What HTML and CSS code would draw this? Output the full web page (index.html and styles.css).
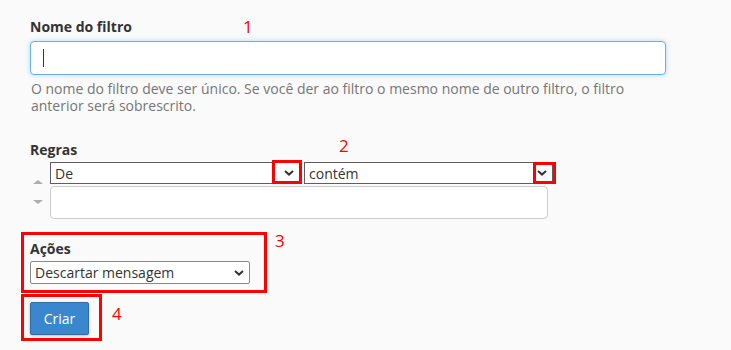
FILE: index.html
```html
<!DOCTYPE html>
<html lang="pt">
<head>
<meta charset="utf-8">
<link rel="stylesheet" href="styles.css">
</head>
<body>
<div class="page">
  <div class="group group-name">
    <label class="label">Nome do filtro</label>
    <span class="mark mark-1">1</span>
    <div class="text-input focus"><span class="caret"></span></div>
    <p class="help">O nome do filtro deve ser único. Se você der ao filtro o mesmo nome de outro filtro, o filtro anterior será sobrescrito.</p>
  </div>

  <div class="group group-rules">
    <label class="label">Regras</label>
    <span class="mark mark-2">2</span>
    <div class="rule">
      <div class="movers">
        <span class="tri tri-up"></span>
        <span class="tri tri-down"></span>
      </div>
      <div class="rule-fields">
        <div class="selects">
          <div class="select sel-part">
            <span>De</span>
            <svg class="chev" width="10" height="6" viewBox="0 0 10 6"><path d="M1 1 L5 4.6 L9 1" fill="none" stroke="#333" stroke-width="2"/></svg>
            <span class="chev-box"></span>
          </div>
          <div class="select sel-match">
            <span>contém</span>
            <svg class="chev" width="10" height="6" viewBox="0 0 10 6"><path d="M1 1 L5 4.6 L9 1" fill="none" stroke="#333" stroke-width="2"/></svg>
            <span class="chev-box"></span>
          </div>
        </div>
        <div class="rule-value"></div>
      </div>
    </div>
  </div>

  <div class="annot-box actions-box">
    <span class="mark mark-3">3</span>
    <label class="label">Ações</label>
    <div class="select sel-action">
      <span>Descartar mensagem</span>
      <svg class="chev" width="10" height="6" viewBox="0 0 10 6"><path d="M1 1 L5 4.6 L9 1" fill="none" stroke="#333" stroke-width="2"/></svg>
    </div>
  </div>

  <div class="annot-box create-box">
    <span class="mark mark-4">4</span>
    <button class="btn">Criar</button>
  </div>
</div>
</body>
</html>
```

FILE: styles.css
```css
* { box-sizing: border-box; }
html, body { margin: 0; padding: 0; }
body {
  background: #fafafa;
  font-family: "Open Sans", "Liberation Sans", sans-serif;
  color: #333;
  width: 731px;
  height: 350px;
  overflow: hidden;
}
.page {
  padding: 17px 0 0 30px;
  width: 700px;
}
.group { position: relative; }
.label {
  display: block;
  font-weight: 700;
  font-size: 14px;
  line-height: 20px;
  color: #333;
}
.mark {
  position: absolute;
  color: #ff0000;
  font-family: "Open Sans", "Liberation Sans", sans-serif;
  font-size: 17px;
  line-height: 20px;
}
.mark-1 { left: 213px; top: 0px; }
.mark-2 { left: 309px; top: -4px; }
.mark-3 { left: 251px; top: -4px; }
.mark-4 { left: 88px; top: 7px; }

.text-input {
  margin-top: 4px;
  width: 636px;
  height: 34px;
  background: #fff;
  border: 1px solid #ccc;
  border-radius: 4px;
  display: flex;
  align-items: center;
  padding-left: 12px;
}
.text-input.focus {
  border-color: #66afe9;
  box-shadow: 0 0 5px rgba(102, 175, 233, 0.45);
}
.caret {
  width: 1px;
  height: 18px;
  background: #333;
}
.help {
  margin: 5px 0 0 1px;
  width: 636px;
  font-size: 14px;
  line-height: 17px;
  color: #767676;
}

.group-rules { margin-top: 26px; }
.rule {
  display: flex;
  margin-top: 2px;
}
.movers {
  width: 20px;
  display: flex;
  flex-direction: column;
  padding: 18px 0 0 3px;
  gap: 16px;
}
.tri {
  width: 0;
  height: 0;
  border-left: 5px solid transparent;
  border-right: 5px solid transparent;
}
.tri-up { border-bottom: 4px solid #adadad; }
.tri-down { border-top: 4px solid #adadad; }
.rule-fields {
  display: flex;
  flex-direction: column;
  gap: 2px;
}
.selects {
  display: flex;
  gap: 4px;
}
.select {
  position: relative;
  background: #fff;
  border: 1px solid #5e5e5e;
  height: 22px;
  display: flex;
  align-items: center;
  justify-content: space-between;
  font-size: 14px;
  color: #333;
  padding: 0 5px 0 4px;
}
.chev { display: block; }
.sel-part { width: 250px; }
.sel-match { width: 249px; }
.chev-box {
  position: absolute;
  right: -3px;
  top: -3px;
  width: 30px;
  height: 24px;
  border: 3px solid #ff0000;
}
.sel-match .chev-box {
  right: -4px;
  top: -1px;
  width: 23px;
  height: 22px;
}
.rule-value {
  width: 498px;
  height: 33px;
  background: #fff;
  border: 1px solid #ccc;
  border-radius: 4px;
}

.annot-box {
  position: relative;
  border: 3px solid #ff0000;
  margin-left: -9px;
}
.actions-box {
  margin-top: 13px;
  width: 246px;
  height: 61px;
  padding: 4px 0 0 6px;
}
.sel-action {
  margin-top: 2px;
  width: 220px;
  height: 23px;
  border-color: #8a8a8a;
  border-radius: 2px;
  padding-right: 5px;
}
.create-box {
  margin-top: 1px;
  width: 81px;
  height: 47px;
  padding: 5px 0 0 6px;
}
.btn {
  display: block;
  width: 59px;
  height: 33px;
  background: #3a87cd;
  border: 1px solid #2e6da8;
  border-radius: 2px;
  color: #fff;
  font-family: "Open Sans", "Liberation Sans", sans-serif;
  font-size: 14px;
  padding: 0;
  box-shadow: 0 1px 3px rgba(0,0,0,0.25);
}
```
